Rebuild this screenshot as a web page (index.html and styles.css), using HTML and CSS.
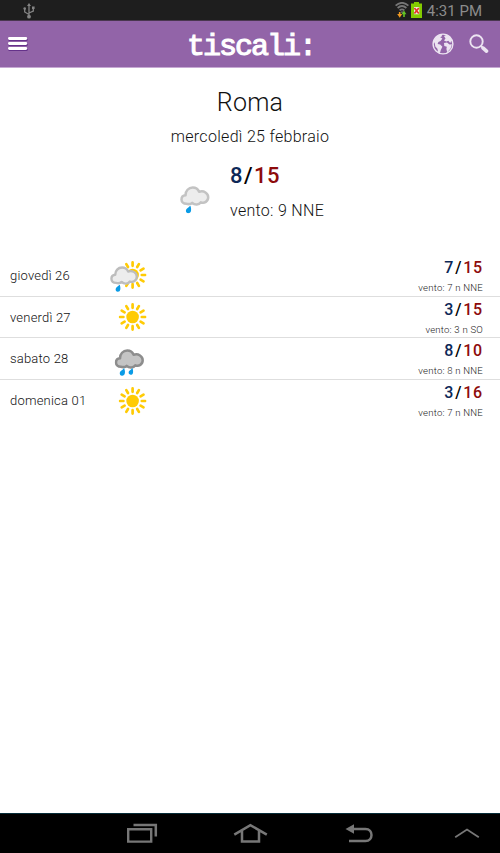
FILE: index.html
```
<!DOCTYPE html>
<html lang="it">
<head>
<meta charset="UTF-8">
<meta name="viewport" content="width=device-width, initial-scale=1.0">
<title>Tiscali Meteo - Roma</title>
<link rel="stylesheet" href="styles.css">
</head>
<body>
<svg class="defs" width="0" height="0">
  <symbol id="sun" viewBox="-14 -14 28 28">
    <circle r="6.3" fill="#ffcb05"/>
    <path d="M0-9.2V-12.6M0 9.2V12.6M9.2 0H12.6M-9.2 0H-12.6M4.6-8L6.3-10.9M8-4.6L10.9-6.3M8 4.6L10.9 6.3M4.6 8L6.3 10.9M-4.6 8L-6.3 10.9M-8 4.6L-10.9 6.3M-8-4.6L-10.9-6.3M-4.6-8L-6.3-10.9" stroke="#ffcb05" stroke-width="2.7" stroke-linecap="round"/>
  </symbol>
  <symbol id="cloud" viewBox="0 0 30 20">
    <path d="M6.3 17.8C3.5 17.8 1.5 16 1.5 13.5C1.5 11 3.2 9.3 5.6 9.2C5.4 4.8 8.6 1.6 12.7 1.6C15.8 1.6 18 3.2 19.1 5.8C24 4.2 28.2 7.3 28.2 11.3C28.2 15.4 24.3 17.8 20.9 16.3C18.9 19.1 14.8 19.4 12.2 16.8C10.5 18.5 8.3 18.3 6.3 17.8Z" stroke-width="2.5" stroke-linejoin="round"/>
  </symbol>
  <symbol id="drop" viewBox="0 0 6 8">
    <path d="M4.8 0C5.5 2.2 5.9 3.5 5.6 5C5.3 6.9 4.2 7.8 2.7 7.7C1 7.6 .1 6.2 .4 4.7C.8 3 3.2 2.1 4.8 0Z" fill="#0a9be6"/>
  </symbol>
</svg>

<div class="status-bar">
  <svg class="usb" width="12" height="16" viewBox="0 0 12 16">
    <path d="M6 2V14M6 11.5L1.7 9V5.5M6 10L10.3 8V4.5" fill="none" stroke="#858585" stroke-width="1.3"/>
    <path d="M6 0L8 3H4Z" fill="#858585"/>
    <circle cx="6" cy="13.7" r="1.9" fill="#858585"/>
    <circle cx="1.7" cy="5.6" r="1.3" fill="#858585"/>
    <path d="M9 3.5H11.6V6H9Z" fill="#858585"/>
  </svg>
  <div class="status-right">
    <svg width="14" height="17" viewBox="0 0 14 17">
      <path d="M.6 3.6Q7-2 13.4 3.6M2.6 6Q7 2 11.4 6M4.6 8.4Q7 6.2 9.4 8.4" fill="none" stroke="#777" stroke-width="1.7"/>
      <path d="M5.6 9.4H8.4L7 11.5Z" fill="#777"/>
      <path d="M4.7 10V13" stroke-width="1.6" stroke="#f09a22"/>
      <path d="M2.2 12H7.2L4.7 15.8Z" fill="#f09a22"/>
      <path d="M6.6 12.2H11.4L9 8.6Z" fill="#64c424"/>
      <path d="M9 12V15" stroke="#64c424" stroke-width="1.6"/>
    </svg>
    <svg width="11" height="16" viewBox="0 0 11 16">
      <path d="M3 0H8V1.5H11V16H0V1.5H3Z" fill="#83cb00"/>
      <path d="M3 5H8.3V12.3H3Z" fill="#e9f1d5"/>
      <path d="M3.4 6L7.8 11.5M7.8 6L3.4 11.5" stroke="#e5322d" stroke-width="1.7"/>
    </svg>
    <span class="clock">4:31 PM</span>
  </div>
</div>

<div class="header">
  <svg class="menu" width="20" height="16" viewBox="0 0 20 16">
    <path d="M1.5 3.7H18.5M1.5 8.7H18.5M1.5 13.7H18.5" stroke="#65328a" stroke-width="2.6" stroke-linecap="round"/>
    <path d="M1.4 2.5H17.8M1.4 7.5H17.8M1.4 12.5H17.8" stroke="#fff" stroke-width="2.8" stroke-linecap="round"/>
  </svg>
  <div class="logo">tiscali:</div>
  <div class="actions">
    <svg width="22" height="22" viewBox="0 0 22 22">
      <circle cx="11" cy="11" r="9.9" fill="none" stroke="#ece4f1" stroke-width="1.4"/>
      <path d="M1.5 8L4.5 3.5L9 1.2L10.3 3L8.2 4.2L10.4 5.6L8.5 8L6.4 9L5.6 11L8.2 11.5L10.4 13.8L8.8 17L8 20L6.2 19.4L5.4 15.8L3.3 13.5L2.8 10.5Z" fill="#ece4f1"/>
      <path d="M12 3L15 1.8L18.5 4.4L20.6 8.5L19.2 8L18.3 10L16.3 7.8L14.3 8.6L12 7.4L13.5 5.4Z" fill="#ece4f1"/>
      <path d="M12 10L15 9.4L17.5 11.5L19.9 11.2L18.6 15.6L15.2 19.2L14.4 16L14.8 13.7L12.3 13Z" fill="#ece4f1"/>
    </svg>
    <svg width="20" height="20" viewBox="0 0 20 20">
      <circle cx="7.5" cy="7.5" r="6.2" fill="none" stroke="#ece4f1" stroke-width="1.9"/>
      <path d="M11.8 11.8L14 14" stroke="#ece4f1" stroke-width="2"/>
      <path d="M14.2 14.2L17.5 17.1" stroke="#ece4f1" stroke-width="3.7" stroke-linecap="round"/>
    </svg>
  </div>
</div>

<div class="content">
  <div class="today">
    <div class="city">Roma</div>
    <div class="date">mercoledì 25 febbraio</div>
    <div class="now">
      <svg class="now-icon" width="30" height="28" viewBox="0 0 30 28">
        <use href="#cloud" width="30" height="20" fill="#ededed" stroke="#c3c3c3"/>
        <use href="#drop" x="5.5" y="19.5" width="6" height="8"/>
      </svg>
      <div class="now-data">
        <div class="temp"><span class="min">8</span><span class="sep">/</span><span class="max">15</span></div>
        <div class="wind">vento: 9 NNE</div>
      </div>
    </div>
  </div>

  <div class="forecast">
    <div class="row">
      <div class="day">giovedì 26</div>
      <svg class="icon" width="40" height="34" viewBox="0 0 40 34">
        <use href="#sun" x="8.6" y="3" width="28" height="28"/>
        <use href="#cloud" x="0" y="8" width="28.5" height="19" fill="#ededed" stroke="#bdbdbd"/>
        <use href="#drop" x="5.2" y="26.6" width="5.6" height="7.4"/>
      </svg>
      <div class="values">
        <div class="temp"><span class="min">7</span><span class="sep">/</span><span class="max">15</span></div>
        <div class="wind">vento: 7 n NNE</div>
      </div>
    </div>
    <div class="row">
      <div class="day">venerdì 27</div>
      <svg class="icon" width="40" height="34" viewBox="0 0 40 34">
        <use href="#sun" x="8.6" y="3" width="28" height="28"/>
      </svg>
      <div class="values">
        <div class="temp"><span class="min">3</span><span class="sep">/</span><span class="max">15</span></div>
        <div class="wind">vento: 3 n SO</div>
      </div>
    </div>
    <div class="row">
      <div class="day">sabato 28</div>
      <svg class="icon" width="40" height="34" viewBox="0 0 40 34">
        <use href="#cloud" x="4.5" y="7" width="30" height="20" fill="#c4c4c4" stroke="#8d8d8d"/>
        <use href="#drop" x="9.3" y="26" width="6" height="8"/>
        <use href="#drop" x="18.2" y="26" width="5.3" height="7"/>
      </svg>
      <div class="values">
        <div class="temp"><span class="min">8</span><span class="sep">/</span><span class="max">10</span></div>
        <div class="wind">vento: 8 n NNE</div>
      </div>
    </div>
    <div class="row">
      <div class="day">domenica 01</div>
      <svg class="icon" width="40" height="34" viewBox="0 0 40 34">
        <use href="#sun" x="8.6" y="3" width="28" height="28"/>
      </svg>
      <div class="values">
        <div class="temp"><span class="min">3</span><span class="sep">/</span><span class="max">16</span></div>
        <div class="wind">vento: 7 n NNE</div>
      </div>
    </div>
  </div>
</div>

<div class="nav-bar">
  <svg width="500" height="39" viewBox="0 0 500 39" fill="none" stroke="#777">
    <path d="M128.2 15.2H151.2V27.6H128.2Z" stroke-width="2.4"/>
    <path d="M133.5 11H155.8V22.5" stroke-width="2.5"/>
    <path d="M234.3 20.6L250.4 11.2L266.8 20.6M242 17V27.5H259V17" stroke-width="2.5"/>
    <path d="M352 15H365.5C373.5 15 373.5 27 365.5 27H349" stroke-width="2.5"/>
    <path d="M345.5 15L354 10.3V19.7Z" fill="#777" stroke="none"/>
    <path d="M455.2 23.3L467 15.6L478.8 23.3" stroke-width="1.8"/>
  </svg>
</div>
</body>
</html>
```
FILE: styles.css
```
body {
  margin: 0;
  height: 853px;
  display: flex;
  flex-direction: column;
  overflow: hidden;
  background: #fff;
  color: #111;
  font-family: Roboto, "Liberation Sans", sans-serif;
}
.defs {
  position: absolute;
}
svg {
  display: block;
  flex: none;
}

/* status bar */
.status-bar {
  display: flex;
  justify-content: space-between;
  box-sizing: border-box;
  height: 21px;
  padding: 2px 19px 0 23px;
  background: #1e1e1e;
  border-bottom: 1px solid #49364f;
}
.usb {
  margin-top: 1px;
}
.status-right {
  display: flex;
  gap: 2px;
}
.clock {
  margin-left: 3px;
  margin-right: -1px;
  font-size: 15px;
  line-height: 18px;
  color: #8c8c8c;
}

/* navigation bar */
.nav-bar {
  flex: none;
  height: 39px;
  background: #000;
  border-top: 1px solid #062c38;
}

/* header */
.header {
  display: grid;
  grid-template-columns: 100px 1fr 100px;
  align-items: center;
  box-sizing: border-box;
  height: 47px;
  background: #9264a8;
  border-bottom: 1px solid #c6a9d3;
}
.menu {
  margin-left: 8px;
}
.logo {
  padding: 6px 0 0 2px;
  text-align: center;
  font-family: "Liberation Mono", monospace;
  font-size: 30px;
  line-height: 40px;
  letter-spacing: -2px;
  color: #fff;
  -webkit-text-stroke: 1.1px #fff;
}
.actions {
  display: flex;
  align-items: center;
  justify-content: flex-end;
  gap: 15px;
  padding-right: 11px;
}

/* today */
.content {
  flex: 1;
}
.today {
  height: 187px;
  padding-top: 17px;
  box-sizing: border-box;
  text-align: center;
}
.city {
  font-size: 25px;
  font-weight: 300;
  line-height: 36px;
  letter-spacing: 0.2px;
}
.date {
  margin-top: 5px;
  font-size: 16px;
  font-weight: 300;
  line-height: 22px;
  letter-spacing: 0.3px;
}
.now {
  display: flex;
  padding: 14px 0 0 180px;
  gap: 20px;
  text-align: left;
}
.now-icon {
  margin-top: 24px;
}
.temp {
  font-weight: 500;
  color: #000;
}
.min {
  color: #0d2857;
}
.sep {
  margin: 0 1px;
}
.max {
  color: #8d0b0b;
}
.now .temp {
  font-size: 22px;
  line-height: 28px;
  letter-spacing: 0.5px;
}
.now .wind {
  margin-top: 9px;
  font-size: 16px;
  font-weight: 300;
  line-height: 24px;
  letter-spacing: 0.3px;
}

/* forecast */
.row {
  display: flex;
  align-items: center;
  box-sizing: border-box;
  height: 41.7px;
  padding: 0 17px 0 10px;
  border-bottom: 1px solid #dedede;
}
.row:last-child {
  border-bottom: none;
}
.day {
  width: 100px;
  font-size: 13px;
  font-weight: 300;
  letter-spacing: 0.2px;
  color: #111;
}
.values {
  margin-left: auto;
  padding-top: 4px;
  text-align: right;
}
.values .temp {
  font-size: 16px;
  line-height: 20px;
  letter-spacing: 0.8px;
}
.values .wind {
  font-size: 9.6px;
  font-weight: 300;
  line-height: 19px;
  letter-spacing: 0.2px;
  color: #222;
}
```
